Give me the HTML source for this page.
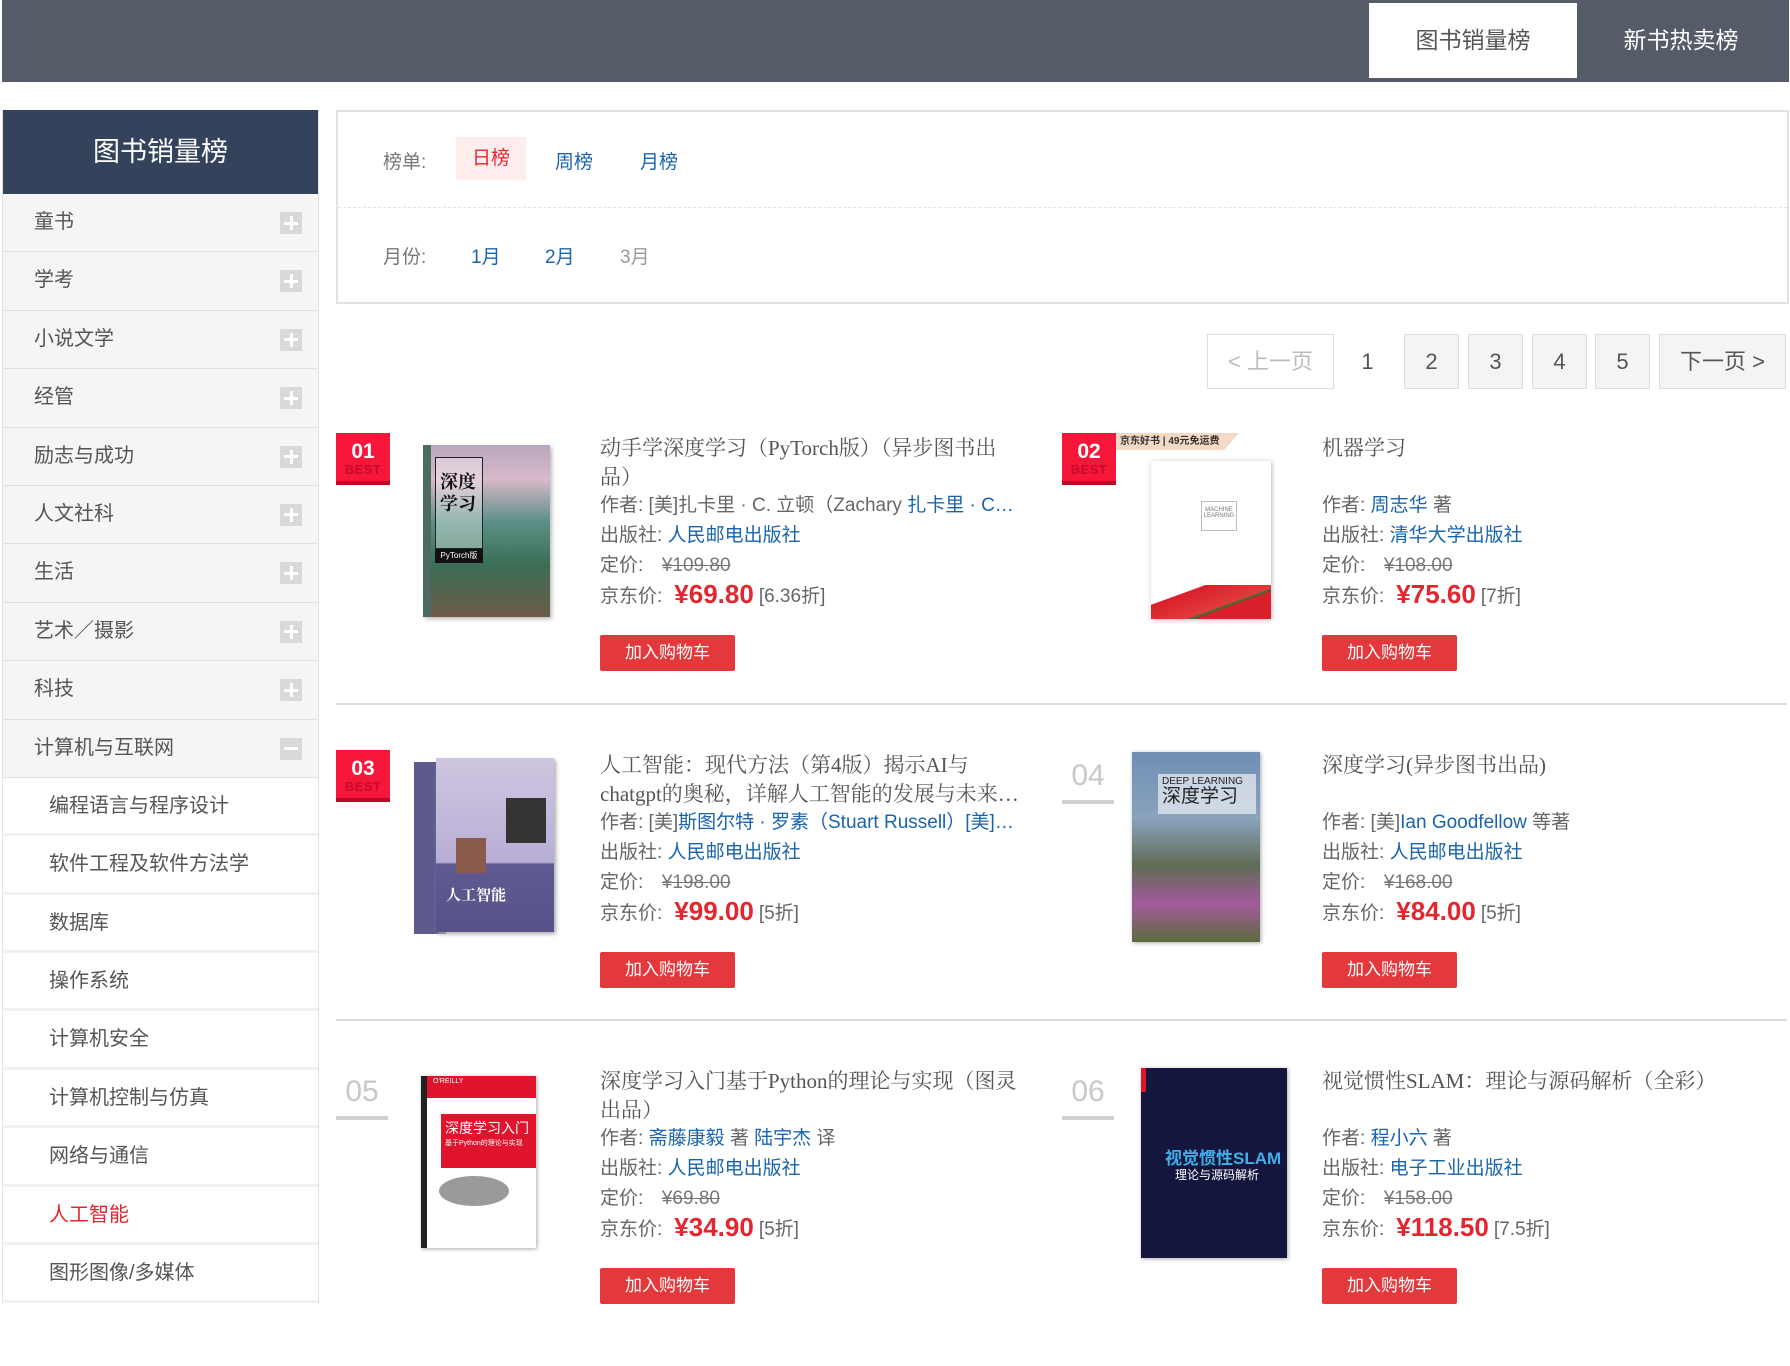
<!DOCTYPE html>
<html><head><meta charset="utf-8">
<style>
*{margin:0;padding:0;box-sizing:border-box}
body{width:1790px;height:1305px;overflow:hidden;background:#fff;font-family:"Liberation Sans","Noto Sans CJK SC",sans-serif;color:#666;position:relative}
.abs{position:absolute}
#nav{left:2px;top:0;width:1787px;height:82px;background:#555c67}
.tab{top:3px;height:75px;width:208px;text-align:center;line-height:75px;font-size:23px;color:#fff}
#side{left:2px;top:110px;width:317px;height:1195px;border-left:1px solid #e3e3e3;border-right:1px solid #e3e3e3}
#sh{height:84px;background:#34425c;color:#fff;font-size:27px;text-align:center;line-height:84px}
.it{height:58.4px;line-height:57px;font-size:20px;color:#555;padding-left:31px;position:relative;background:#f5f5f5;border-bottom:1.5px solid #e1e1e1}
.it.sub{background:#fff;padding-left:46px;border-bottom:3px solid #f2f2f2}
.ic{position:absolute;right:16px;top:18px;width:22px;height:22px;background:#d9d9d9}
.ic:before{content:"";position:absolute;left:4px;top:9.5px;width:14px;height:3px;background:#fff}
.ic.p:after{content:"";position:absolute;left:9.5px;top:4px;width:3px;height:14px;background:#fff}
#filt{left:336px;top:110px;width:1453px;height:194px;border:2px solid #e2e2e2}
.fl{font-size:19px;position:absolute}
.pg{top:334px;height:55px;border:1px solid #ddd;background:#f4f4f4;font-size:22px;color:#555;text-align:center;line-height:53px}
.prod{position:absolute;width:700px;height:300px}
.badge{position:absolute;left:0;top:0;width:54px;height:52px;background:#f5163a;border-bottom:4px solid #b70a25;text-align:center;color:#fff}
.badge b{display:block;font-size:21px;line-height:21px;padding-top:8px;font-family:"Liberation Sans",sans-serif}
.badge i{display:block;font-style:normal;font-weight:bold;font-size:13px;color:#c50c2c;letter-spacing:0.5px;line-height:16px}
.rk{position:absolute;left:0;top:0;width:52px;text-align:center;font-size:30px;color:#c8c8c8;line-height:52px;border-bottom:4px solid #d0d0d0;height:54px}
.txt{position:absolute;left:264px;top:0;width:430px}
.R .txt,.R .btn{left:260px}
.tt{font-family:"Liberation Serif","Noto Serif CJK SC",serif;font-size:21px;line-height:29px;color:#555;height:57px;margin-top:1px}
.ln{font-size:19px;line-height:30px;color:#666;white-space:nowrap;overflow:hidden;text-overflow:ellipsis;height:30px}
.ln a{color:#1a64ad;text-decoration:none}
.ln s{color:#777;margin-left:8px}
.pr{color:#e4262f;font-size:26px;font-weight:bold;margin:0 5px 0 12px;line-height:1;vertical-align:-1px}
.btn{position:absolute;left:264px;top:202px;width:135px;height:36px;background:#e4393c;color:#fff;font-size:17px;text-align:center;line-height:36px;border-radius:2px}
.cov{position:absolute;overflow:hidden}
.sep{position:absolute;left:336px;width:1451px;height:2px;background:#dcdcdc}
</style></head><body>
<div id="nav" class="abs"></div>
<div class="abs tab" style="left:1369px;background:#fff;color:#555">图书销量榜</div>
<div class="abs tab" style="left:1577px">新书热卖榜</div>

<div id="side" class="abs">
<div id="sh">图书销量榜</div>
<div class="it">童书<span class="ic p"></span></div>
<div class="it">学考<span class="ic p"></span></div>
<div class="it">小说文学<span class="ic p"></span></div>
<div class="it">经管<span class="ic p"></span></div>
<div class="it">励志与成功<span class="ic p"></span></div>
<div class="it">人文社科<span class="ic p"></span></div>
<div class="it">生活<span class="ic p"></span></div>
<div class="it">艺术／摄影<span class="ic p"></span></div>
<div class="it">科技<span class="ic p"></span></div>
<div class="it">计算机与互联网<span class="ic"></span></div>
<div class="it sub">编程语言与程序设计</div>
<div class="it sub">软件工程及软件方法学</div>
<div class="it sub">数据库</div>
<div class="it sub">操作系统</div>
<div class="it sub">计算机安全</div>
<div class="it sub">计算机控制与仿真</div>
<div class="it sub">网络与通信</div>
<div class="it sub" style="color:#e4262f">人工智能</div>
<div class="it sub">图形图像/多媒体</div>
</div>

<div id="filt" class="abs">
<div style="position:absolute;left:0;right:0;top:95px;border-top:1px dashed #e3e3e3"></div>
<span class="fl" style="left:45px;top:35px;color:#777">榜单:</span>
<span class="fl" style="left:118px;top:25px;width:70px;height:43px;background:#fdeded;color:#e4262f;text-align:center;line-height:43px">日榜</span>
<span class="fl" style="left:217px;top:35px;color:#1a64ad">周榜</span>
<span class="fl" style="left:302px;top:35px;color:#1a64ad">月榜</span>
<span class="fl" style="left:45px;top:130px;color:#777">月份:</span>
<span class="fl" style="left:133px;top:130px;color:#1a64ad">1月</span>
<span class="fl" style="left:207px;top:130px;color:#1a64ad">2月</span>
<span class="fl" style="left:282px;top:130px;color:#999">3月</span>
</div>

<div class="abs pg" style="left:1207px;width:127px;background:#fff;color:#bbb">&lt; 上一页</div>
<div class="abs pg" style="left:1340px;width:55px;background:#fff;border-color:#fff">1</div>
<div class="abs pg" style="left:1404px;width:55px">2</div>
<div class="abs pg" style="left:1468px;width:55px">3</div>
<div class="abs pg" style="left:1532px;width:55px">4</div>
<div class="abs pg" style="left:1595px;width:55px">5</div>
<div class="abs pg" style="left:1659px;width:127px">下一页 &gt;</div>

<!-- Row 1 -->
<div class="prod" style="left:336px;top:433px">
<div class="badge"><b>01</b><i>BEST</i></div>
<div class="cov" style="left:87px;top:12px;width:127px;height:172px;background:linear-gradient(180deg,#b9a7bf 0%,#d8b9c9 20%,#5a8f86 45%,#3b6e55 70%,#6d5a47 100%);box-shadow:2px 2px 4px #bbb">
<div style="position:absolute;left:12px;top:12px;width:48px;height:92px;border:1px solid #222;background:rgba(255,255,255,.35);font-family:'Noto Serif CJK SC',serif;font-size:18px;color:#111;line-height:22px;padding:12px 2px 0 4px;font-weight:bold">深度学习</div>
<div style="position:absolute;left:12px;top:104px;width:48px;height:14px;background:#111;color:#fff;font-size:8px;line-height:14px;text-align:center">PyTorch版</div>
<div style="position:absolute;left:0;top:0;width:8px;height:172px;background:#4d6b62"></div>
</div>
<div class="txt">
<div class="tt">动手学深度学习（PyTorch版）（异步图书出<br>品）</div>
<div class="ln">作者:&nbsp;[美]扎卡里 · C. 立顿（Zachary <a>扎卡里 · C…</a></div>
<div class="ln">出版社: <a>人民邮电出版社</a></div>
<div class="ln">定价:&nbsp; <s>¥109.80</s></div>
<div class="ln">京东价:<span class="pr">¥69.80</span>[6.36折]</div>
</div>
<div class="btn">加入购物车</div>
</div>

<div class="prod R" style="left:1062px;top:433px">
<div class="cov" style="left:52px;top:0;width:125px;height:17px;background:#f4d9c4;clip-path:polygon(0 0,100% 0,88% 100%,0 100%);font-size:10px;color:#333;line-height:17px;padding-left:6px;font-weight:bold">京东好书 | 49元免运费</div>
<div class="badge"><b>02</b><i>BEST</i></div>
<div class="cov" style="left:89px;top:28px;width:120px;height:158px;background:#fff;box-shadow:1px 1px 5px #bbb">
<div style="position:absolute;left:50px;top:40px;width:36px;height:30px;border:1px solid #bbb;font-size:6px;color:#777;text-align:center;padding-top:5px">MACHINE<br>LEARNING</div>
<div style="position:absolute;left:0;bottom:0;width:120px;height:34px;background:linear-gradient(160deg,#fff 0%,#fff 25%,#d81f2b 26%,#e23b3b 60%,#1d7a36 62%,#d81f2b 65%)"></div>
</div>
<div class="txt">
<div class="tt">机器学习</div>
<div class="ln">作者:&nbsp;<a>周志华</a>&nbsp;著</div>
<div class="ln">出版社: <a>清华大学出版社</a></div>
<div class="ln">定价:&nbsp; <s>¥108.00</s></div>
<div class="ln">京东价:<span class="pr">¥75.60</span>[7折]</div>
</div>
<div class="btn">加入购物车</div>
</div>

<div class="sep" style="top:703px"></div>

<!-- Row 2 -->
<div class="prod" style="left:336px;top:750px">
<div class="badge"><b>03</b><i>BEST</i></div>
<div class="cov" style="left:78px;top:12px;width:32px;height:172px;background:#5d5a8c"></div>
<div class="cov" style="left:100px;top:8px;width:118px;height:174px;background:linear-gradient(180deg,#cfc6e0 0%,#b8aed6 60%,#5f5a92 61%,#57528a 100%);box-shadow:2px 2px 4px #aaa">
<div style="position:absolute;left:10px;top:126px;color:#fff;font-family:'Noto Serif CJK SC',serif;font-weight:bold;font-size:15px">人工智能</div>
<div style="position:absolute;left:70px;top:40px;width:40px;height:45px;background:#333"></div>
<div style="position:absolute;left:20px;top:80px;width:30px;height:35px;background:#8a5a4a"></div>
</div>
<div class="txt">
<div class="tt">人工智能：现代方法（第4版）揭示AI与<br>chatgpt的奥秘，详解人工智能的发展与未来…</div>
<div class="ln">作者:&nbsp;[美]<a>斯图尔特 · 罗素（Stuart Russell）[美]…</a></div>
<div class="ln">出版社: <a>人民邮电出版社</a></div>
<div class="ln">定价:&nbsp; <s>¥198.00</s></div>
<div class="ln">京东价:<span class="pr">¥99.00</span>[5折]</div>
</div>
<div class="btn">加入购物车</div>
</div>

<div class="prod R" style="left:1062px;top:750px">
<div class="rk">04</div>
<div class="cov" style="left:70px;top:2px;width:128px;height:190px;background:linear-gradient(180deg,#6f8fb4 0%,#8aa3bd 35%,#5f6b55 60%,#a35a9c 80%,#5b6b3c 100%);box-shadow:1px 1px 4px #aaa">
<div style="position:absolute;left:26px;top:22px;width:98px;height:40px;background:rgba(255,255,255,.6);font-size:10px;color:#222;padding:2px 4px">DEEP LEARNING<div style="font-size:19px;line-height:20px">深度学习</div></div>
</div>
<div class="txt">
<div class="tt">深度学习(异步图书出品)</div>
<div class="ln">作者:&nbsp;[美]<a>Ian Goodfellow</a>&nbsp;等著</div>
<div class="ln">出版社: <a>人民邮电出版社</a></div>
<div class="ln">定价:&nbsp; <s>¥168.00</s></div>
<div class="ln">京东价:<span class="pr">¥84.00</span>[5折]</div>
</div>
<div class="btn">加入购物车</div>
</div>

<div class="sep" style="top:1019px"></div>

<!-- Row 3 -->
<div class="prod" style="left:336px;top:1066px">
<div class="rk">05</div>
<div class="cov" style="left:85px;top:10px;width:115px;height:172px;background:#fff;box-shadow:1px 1px 4px #aaa">
<div style="position:absolute;left:0;top:0;width:6px;height:172px;background:#222"></div>
<div style="position:absolute;left:6px;top:0;width:109px;height:22px;background:#e0142c;color:#fff;font-size:7px;padding:2px 6px">O'REILLY</div>
<div style="position:absolute;left:20px;top:38px;width:95px;height:54px;background:#e0142c;color:#fff;font-size:14px;padding:6px 4px;line-height:16px">深度学习入门<div style="font-size:7px">基于Python的理论与实现</div></div>
<div style="position:absolute;left:18px;top:100px;width:70px;height:30px;border-radius:50%;background:#9a9a9a"></div>
</div>
<div class="txt">
<div class="tt">深度学习入门基于Python的理论与实现（图灵<br>出品）</div>
<div class="ln">作者:&nbsp;<a>斋藤康毅</a>&nbsp;著&nbsp;<a>陆宇杰</a>&nbsp;译</div>
<div class="ln">出版社: <a>人民邮电出版社</a></div>
<div class="ln">定价:&nbsp; <s>¥69.80</s></div>
<div class="ln">京东价:<span class="pr">¥34.90</span>[5折]</div>
</div>
<div class="btn">加入购物车</div>
</div>

<div class="prod R" style="left:1062px;top:1066px">
<div class="rk">06</div>
<div class="cov" style="left:79px;top:2px;width:146px;height:190px;background:#14163e;box-shadow:1px 1px 4px #aaa">
<div style="position:absolute;left:0;top:0;width:5px;height:24px;background:#e0142c"></div>
<div style="position:absolute;left:24px;top:76px;color:#3fb0e8;font-weight:bold;font-size:17px">视觉惯性SLAM</div>
<div style="position:absolute;left:34px;top:98px;color:#fff;font-size:12px">理论与源码解析</div>
</div>
<div class="txt">
<div class="tt">视觉惯性SLAM：理论与源码解析（全彩）</div>
<div class="ln">作者:&nbsp;<a>程小六</a>&nbsp;著</div>
<div class="ln">出版社: <a>电子工业出版社</a></div>
<div class="ln">定价:&nbsp; <s>¥158.00</s></div>
<div class="ln">京东价:<span class="pr">¥118.50</span>[7.5折]</div>
</div>
<div class="btn">加入购物车</div>
</div>
</body></html>
